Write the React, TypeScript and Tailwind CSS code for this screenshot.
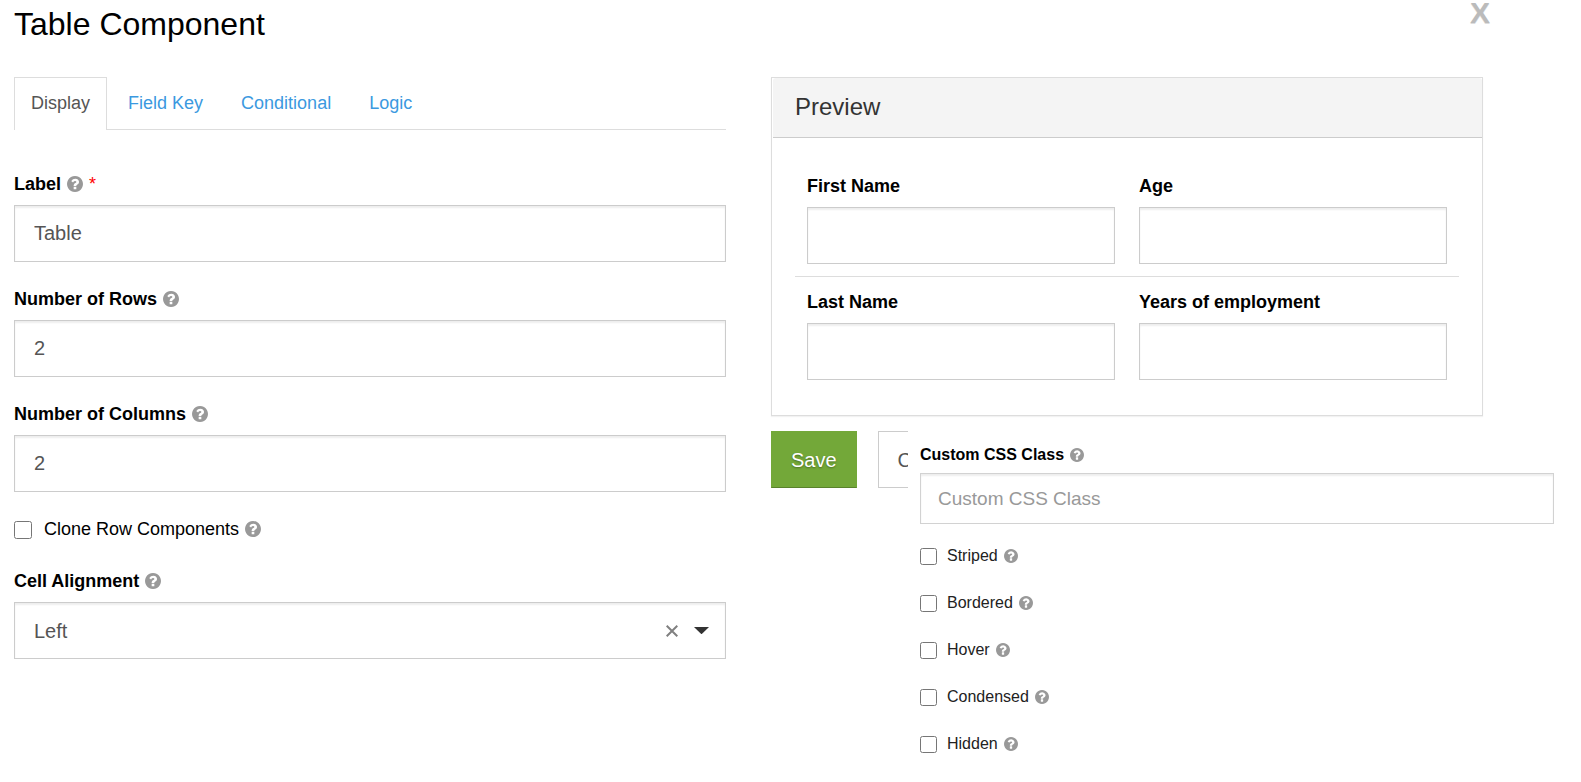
import { useState } from "react";

const inputShadow = "shadow-[inset_0_2px_2px_rgba(0,0,0,0.07)]";

function HelpIcon({ small = false }: { small?: boolean }) {
  return (
    <svg
      viewBox="128 128 1536 1536"
      aria-hidden="true"
      className={small ? "size-[14px] shrink-0 fill-[#999]" : "size-4 shrink-0 fill-[#999]"}
    >
      <path d="M1024 1376v-192q0-14-9-23t-23-9h-192q-14 0-23 9t-9 23v192q0 14 9 23t23 9h192q14 0 23-9t9-23zm256-672q0-88-55.5-163t-138.5-116-170-41q-243 0-371 213-15 24 8 42l132 100q7 6 19 6 16 0 25-12 53-68 86-92 34-24 86-24 48 0 85.5 26t37.5 59q0 38-20 61t-68 45q-63 28-115.5 86.5t-52.5 125.5v36q0 14 9 23t23 9h192q14 0 23-9t9-23q0-19 21.5-49.5t54.5-49.5q32-18 49-28.5t46-35 44.5-48 28-60.5 12.5-81zm384 192q0 209-103 385.5t-279.5 279.5-385.5 103-385.5-103-279.5-279.5-103-385.5 103-385.5 279.5-279.5 385.5-103 385.5 103 279.5 279.5 103 385.5z" />
    </svg>
  );
}

function FieldLabel({ id, text, required = false }: { id: string; text: string; required?: boolean }) {
  return (
    <label htmlFor={id} className="mb-[7px] flex items-center gap-[6px] text-[18px] leading-7 font-bold text-black">
      {text}
      <HelpIcon />
      {required && <span className="font-normal text-[#f00]">*</span>}
    </label>
  );
}

function TextField({ id, label, value, required = false }: { id: string; label: string; value: string; required?: boolean }) {
  return (
    <div className="mb-[23px]">
      <FieldLabel id={id} text={label} required={required} />
      <input
        id={id}
        type="text"
        defaultValue={value}
        className={`block h-[57px] w-full border border-[#ccc] bg-white px-[19px] text-[20px] text-[#555] ${inputShadow}`}
      />
    </div>
  );
}

const tabs = ["Display", "Field Key", "Conditional", "Logic"];

const previewRows = [
  [
    { id: "first-name", label: "First Name" },
    { id: "age", label: "Age" },
  ],
  [
    { id: "last-name", label: "Last Name" },
    { id: "years", label: "Years of employment" },
  ],
];

const styleOptions = ["Striped", "Bordered", "Hover", "Condensed", "Hidden"];

export default function App() {
  const [active, setActive] = useState("Display");
  const [alignment, setAlignment] = useState("Left");

  return (
    <div className="min-h-screen bg-white font-['Liberation_Sans',Arial,sans-serif] text-black">
      <header className="flex items-start justify-between pr-[91px] pl-[14px]">
        <h1 className="pt-1 text-[32px] leading-10">Table Component</h1>
        <button
          type="button"
          aria-label="Close"
          className="text-[30px] leading-[26px] font-bold text-[#bbb] [text-shadow:0_1px_0_#ddd]"
        >
          X
        </button>
      </header>

      <main className="mt-[33px] grid grid-cols-2 gap-[45px] pr-[98px] pl-[14px]">
        <form>
          <div role="tablist" className="flex border-b border-[#ddd] text-[18px]">
            {tabs.map((tab) => (
              <button
                key={tab}
                type="button"
                role="tab"
                aria-selected={active === tab}
                onClick={() => setActive(tab)}
                className={
                  active === tab
                    ? "mr-1 -mb-px h-[53px] border border-b-0 border-[#ddd] bg-white px-4 pb-[2px] text-[#555]"
                    : "mr-1 -mb-px h-[53px] border border-b-0 border-transparent px-4 pb-[2px] text-[#3b99e0]"
                }
              >
                {tab}
              </button>
            ))}
          </div>

          <div className="pt-10">
            <TextField id="label" label="Label" value="Table" required />
            <TextField id="rows" label="Number of Rows" value="2" />
            <TextField id="columns" label="Number of Columns" value="2" />

            <div className="mb-6 flex h-7 items-center">
              <input id="clone" type="checkbox" className="mt-[2px] mr-3 size-[18px]" />
              <label htmlFor="clone" className="flex items-center gap-[6px] text-[18px]">
                Clone Row Components
                <HelpIcon />
              </label>
            </div>

            <FieldLabel id="alignment" text="Cell Alignment" />
            <div className="relative">
              <select
                id="alignment"
                value={alignment}
                onChange={(e) => setAlignment(e.target.value)}
                className={`block h-[57px] w-full appearance-none border border-[#ccc] bg-white px-[19px] text-[20px] text-[#555] ${inputShadow}`}
              >
                <option value=""></option>
                <option>Left</option>
                <option>Center</option>
                <option>Right</option>
              </select>
              <button
                type="button"
                aria-label="Clear"
                onClick={() => setAlignment("")}
                className="absolute inset-y-0 right-[48px] flex items-center"
              >
                <svg viewBox="0 0 12 12" className="size-3 fill-none stroke-[#808080] stroke-2">
                  <path d="M0.7 0.7 11.3 11.3M11.3 0.7 0.7 11.3" />
                </svg>
              </button>
              <div className="pointer-events-none absolute inset-y-0 right-[17px] flex items-center">
                <svg viewBox="0 0 15 7" className="h-[7px] w-[15px] fill-[#333]">
                  <path d="M0 0H15L7.5 7.3Z" />
                </svg>
              </div>
            </div>
          </div>
        </form>

        <div>
          <section className="border border-[#ddd] bg-white shadow-[0_1px_1px_rgba(0,0,0,0.05)]">
            <div className="ml-px rounded-t-[3px] border-b border-[#ccc] bg-[#f4f4f4] pt-[13px] pr-[23px] pb-[15px] pl-[22px]">
              <h2 className="text-[24px] leading-[31px] text-[#333]">Preview</h2>
            </div>
            <div className="px-[23px] pt-[23px] pb-[23px]">
              <table className="w-full table-fixed border-collapse">
                <tbody>
                  {previewRows.map((row, i) => (
                    <tr key={row[0].id} className={i > 0 ? "border-t border-[#ddd]" : ""}>
                      {row.map((field) => (
                        <td key={field.id} className="px-3 pt-[11px] pb-3">
                          <label htmlFor={field.id} className="mb-[7px] block text-[18px] leading-7 font-bold">
                            {field.label}
                          </label>
                          <input
                            id={field.id}
                            type="text"
                            className={`block h-[57px] w-full border border-[#ccc] bg-white px-[19px] text-[20px] text-[#555] ${inputShadow}`}
                          />
                        </td>
                      ))}
                    </tr>
                  ))}
                </tbody>
              </table>
            </div>
          </section>

          <div className="relative mt-[15px] flex gap-[21px] text-[20px]">
            <button
              type="button"
              className="h-[57px] border border-[#73a839] border-b-[#59822c] bg-[#73a839] px-[19px] text-white [text-shadow:0_1px_2px_rgba(0,0,0,0.35)]"
            >
              Save
            </button>
            <button type="button" className="h-[57px] border border-[#ccc] bg-white px-[19px] text-[#555]">
              Cancel
            </button>

            <div className="absolute top-0 -right-[98px] left-[137px] bg-white pt-3 pr-[27px] pl-3 text-[16px]">
              <label htmlFor="css-class" className="mb-[6px] flex items-center gap-[6px] leading-6 font-bold">
                Custom CSS Class
                <HelpIcon small />
              </label>
              <input
                id="css-class"
                type="text"
                placeholder="Custom CSS Class"
                className={`block h-[51px] w-full border border-[#d2d2d2] bg-white px-[17px] text-[19px] text-[#555] placeholder:text-[#999] ${inputShadow}`}
              />
              <div className="mt-[19px] flex flex-col gap-[22px]">
                {styleOptions.map((option) => (
                  <div key={option} className="flex items-center leading-[25px]">
                    <input id={option} type="checkbox" className="mt-[2px] mr-[10px] size-[17px]" />
                    <label htmlFor={option} className="flex items-center gap-[6px] text-[#222]">
                      {option}
                      <HelpIcon small />
                    </label>
                  </div>
                ))}
              </div>
            </div>
          </div>
        </div>
      </main>
    </div>
  );
}
